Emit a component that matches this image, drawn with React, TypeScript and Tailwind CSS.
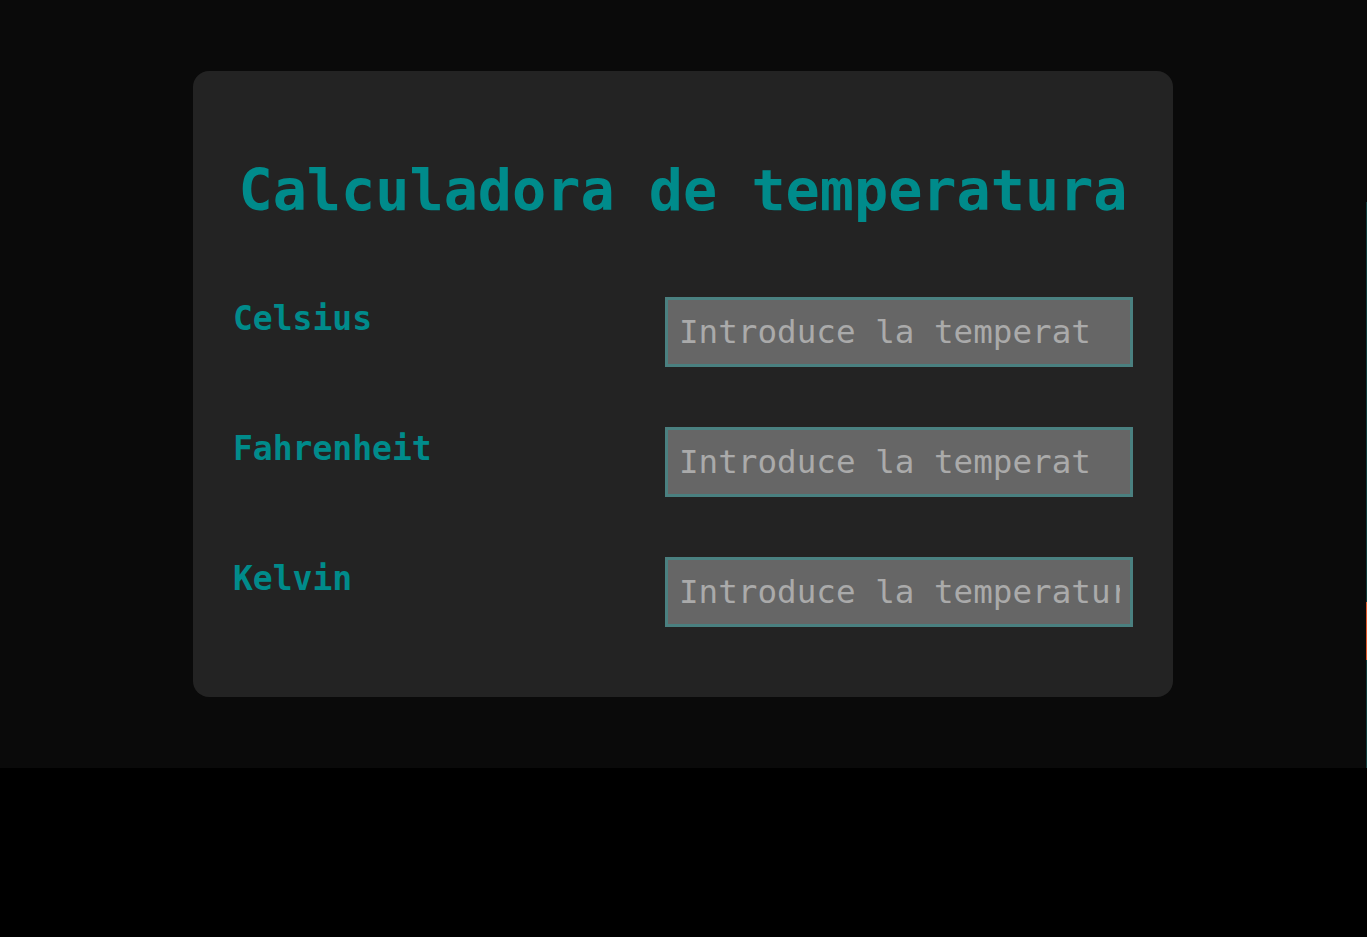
export default function App() {
	const campos = [
		{ id: "celsius", nombre: "Celsius", tipo: "number" },
		{ id: "fahrenheit", nombre: "Fahrenheit", tipo: "number" },
		{ id: "kelvin", nombre: "Kelvin", tipo: "text" },
	];
	return (
		<div className="bg-black min-h-[937px] font-['DejaVu_Sans_Mono',monospace]">
			<div className="relative bg-[#0a0a0a] h-[768px] pt-[71px]">
				<div className="ml-[193px] w-[980px] h-[626px] bg-[#232323] rounded-2xl px-10 pt-[85px]">
					<h1 className="text-center text-[56.8px] leading-[68px] font-bold text-[#008b8b]">
						Calculadora de temperatura
					</h1>
					<div className="mt-[73px] flex flex-col gap-[60px]">
						{campos.map((c) => (
							<div key={c.id} className="flex justify-between items-start">
								<label
									htmlFor={c.id}
									className="text-[33px] leading-[38px] font-bold text-[#008b8b] pt-[3px]"
								>
									{c.nombre}
								</label>
								<input
									id={c.id}
									type={c.tipo}
									placeholder="Introduce la temperatura"
									className={
										c.tipo === "number"
											? "w-[468px] h-[70px] bg-[#666666] border-[3px] border-[#4a8080] pl-[11px] pr-[22px] text-[32.6px] text-[#aaaaaa] placeholder:text-[#aaaaaa] outline-none font-['DejaVu_Sans_Mono',monospace]"
											: "w-[468px] h-[70px] bg-[#666666] border-[3px] border-[#4a8080] pl-[11px] pr-[10px] text-[32.6px] text-[#aaaaaa] placeholder:text-[#aaaaaa] outline-none font-['DejaVu_Sans_Mono',monospace]"
									}
								/>
							</div>
						))}
					</div>
				</div>
				{/* thin edge line on the right */}
				<div className="absolute right-0 top-[202px] w-px h-[566px] bg-[#0f3a3a]">
					<div className="mt-[400px] h-[58px] bg-[#e0582a]" />
				</div>
			</div>
		</div>
	);
}
